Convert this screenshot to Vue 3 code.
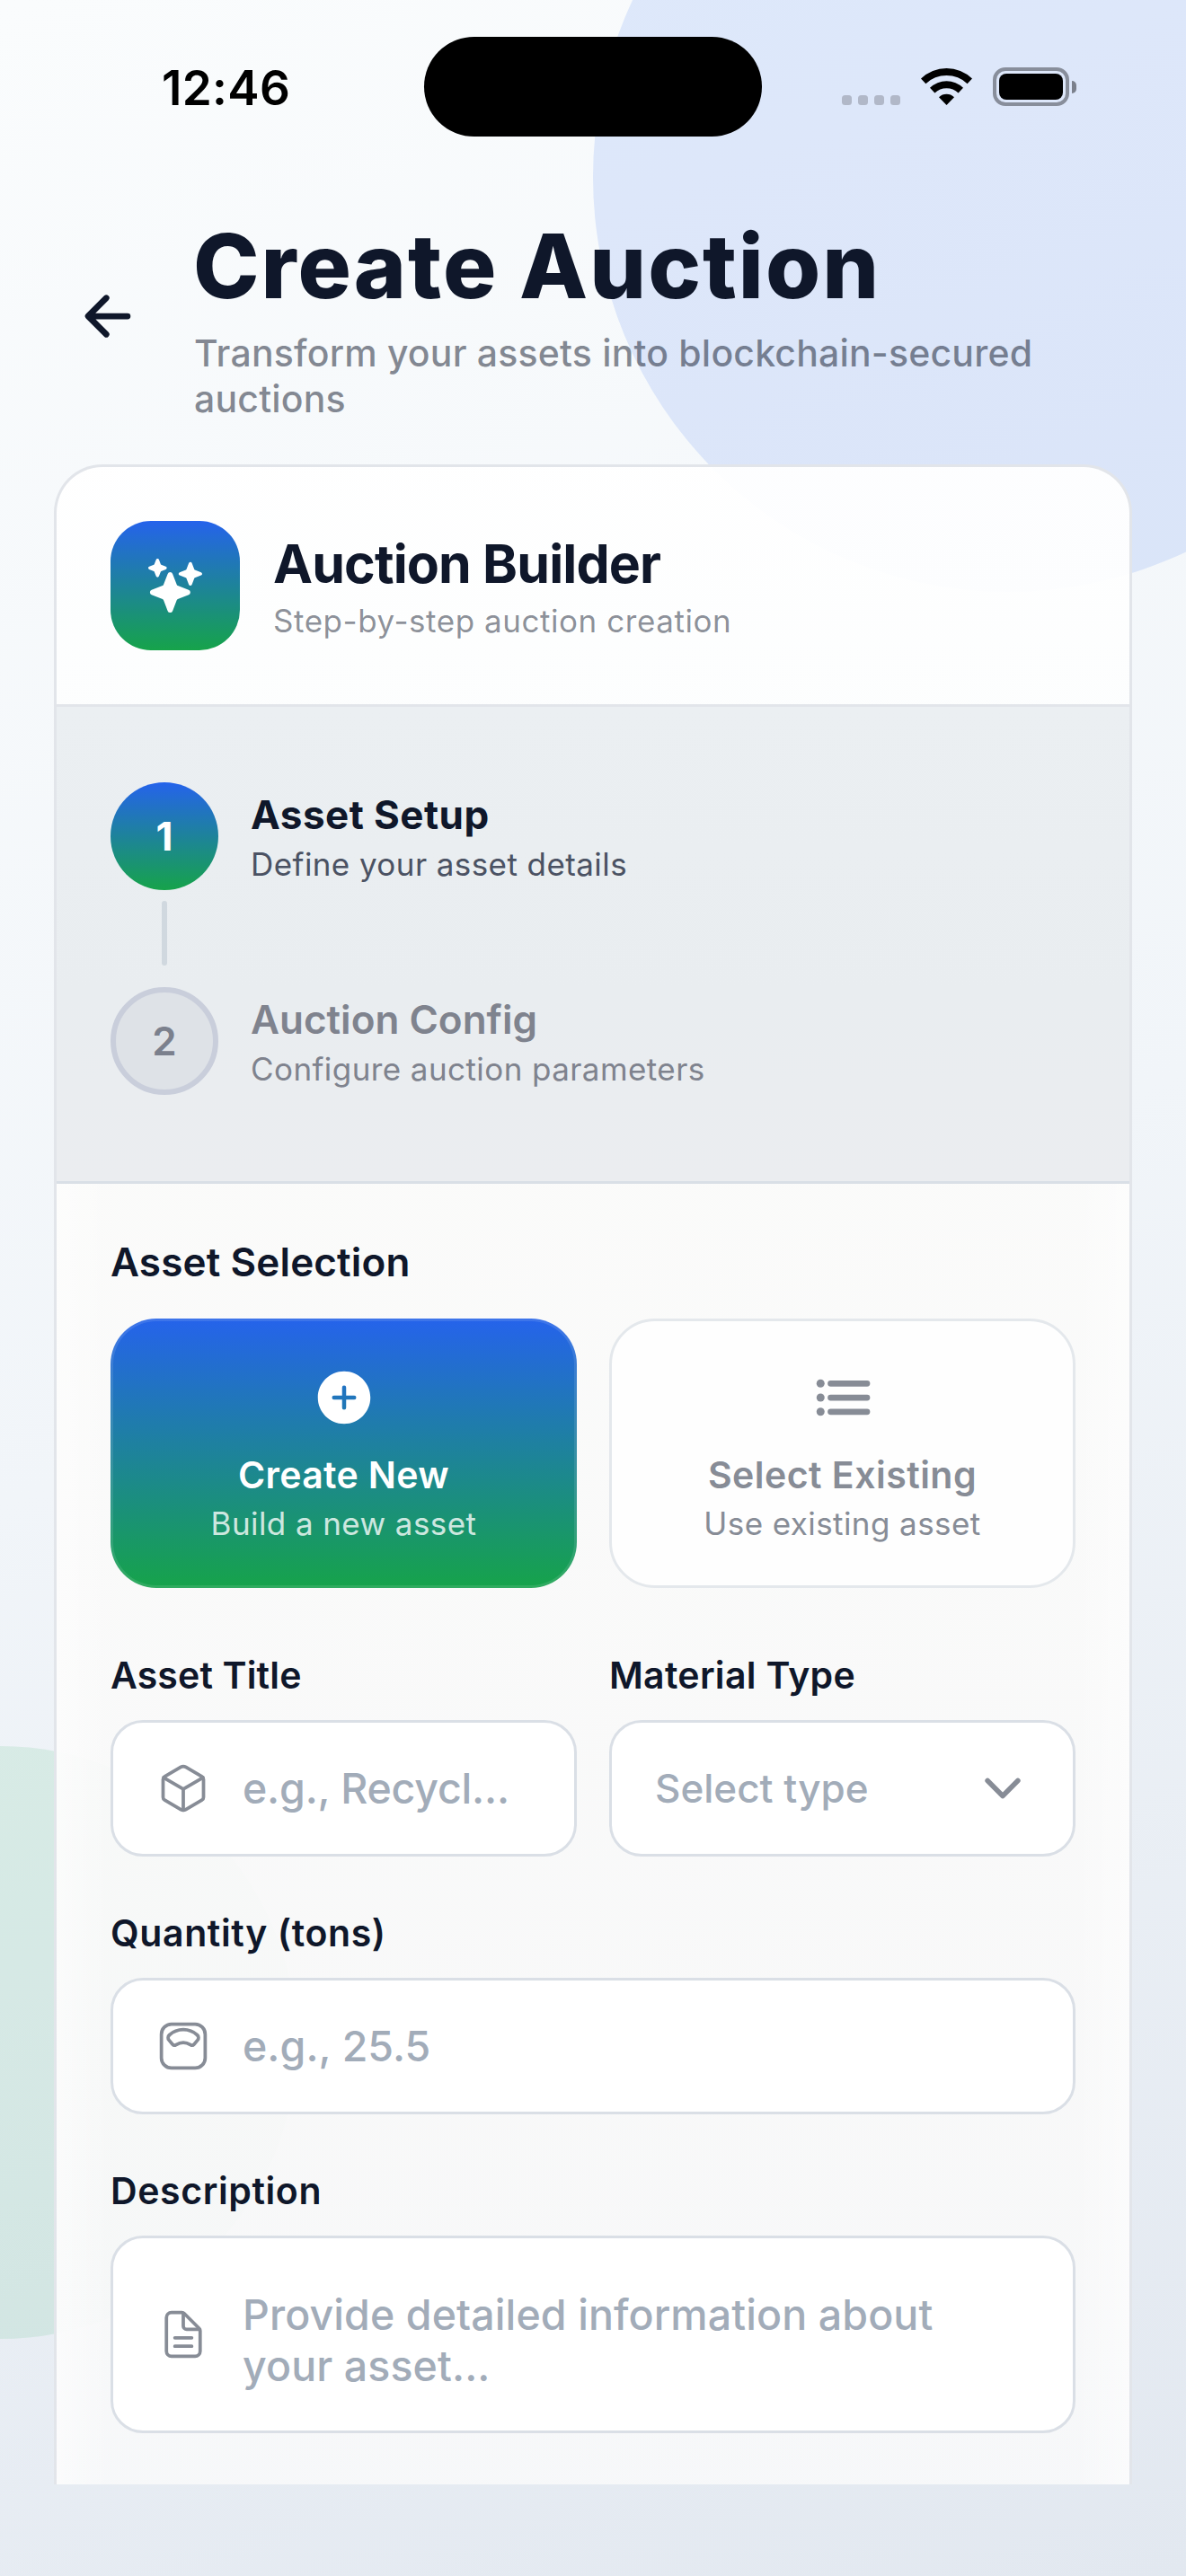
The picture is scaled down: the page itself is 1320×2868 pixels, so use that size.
<template>
  <div class="screen">
    <div class="blob blob-blue"></div>
    <div class="blob blob-green"></div>

    <!-- Status bar -->
    <div class="status-bar">
      <span class="time">12:46</span>
      <div class="island"></div>
      <div class="status-icons">
        <div class="signal"><i v-for="n in 4" :key="n"></i></div>
        <svg class="wifi" viewBox="0 0 57 42">
          <path d="M28.5 42 L20 33.2 A12.3 12.3 0 0 1 37 33.2 Z" />
          <path d="M10 22.8 A26.5 26.5 0 0 1 47 22.8 L41.6 28.4 A19 19 0 0 0 15.4 28.4 Z" />
          <path d="M0 12.6 A41 41 0 0 1 57 12.6 L51.6 18.2 A33.5 33.5 0 0 0 5.4 18.2 Z" />
        </svg>
        <div class="battery"><div class="battery-level"></div></div>
        <div class="battery-cap"></div>
      </div>
    </div>

    <!-- Page header -->
    <header class="header">
      <button class="back">
        <svg viewBox="0 0 512 512" class="line bold">
          <path d="M244 400L100 256l144-144M120 256h292" />
        </svg>
      </button>
      <div>
        <h1>Create Auction</h1>
        <p class="tagline">Transform your assets into blockchain-secured auctions</p>
      </div>
    </header>

    <main class="card">
      <div class="card-header">
        <div class="logo">
          <svg viewBox="0 0 512 512">
            <path
              d="M208 512a24.84 24.84 0 01-23.34-16l-39.84-103.6a16.06 16.06 0 00-9.19-9.19L32 343.34a25 25 0 010-46.68l103.6-39.84a16.06 16.06 0 009.19-9.19L184.66 144a25 25 0 0146.68 0l39.84 103.6a16.06 16.06 0 009.19 9.19l103 39.63a25.49 25.49 0 0116.63 24.1 24.82 24.82 0 01-16 22.82l-103.6 39.84a16.06 16.06 0 00-9.19 9.19L231.34 496A24.84 24.84 0 01208 512zM88 176a14.67 14.67 0 01-13.69-9.4l-16.86-43.84a7.28 7.28 0 00-4.21-4.21L9.4 101.69a14.67 14.67 0 010-27.38l43.84-16.86a7.31 7.31 0 004.21-4.21L74.16 9.79A15 15 0 0186.23.11a14.67 14.67 0 0115.46 9.29l16.86 43.84a7.31 7.31 0 004.21 4.21l43.84 16.86a14.67 14.67 0 010 27.38l-43.84 16.86a7.28 7.28 0 00-4.21 4.21l-16.86 43.84A14.67 14.67 0 0188 176zM400 256a16 16 0 01-14.93-10.26l-22.84-59.37a8 8 0 00-4.6-4.6l-59.37-22.84a16 16 0 010-29.86l59.37-22.84a8 8 0 004.6-4.6L384.9 42.68a16.45 16.45 0 0113.17-10.57 16 16 0 0116.86 10.15l22.84 59.37a8 8 0 004.6 4.6l59.37 22.84a16 16 0 010 29.86l-59.37 22.84a8 8 0 00-4.6 4.6l-22.84 59.37A16 16 0 01400 256z"
            />
          </svg>
        </div>
        <div>
          <h2>Auction Builder</h2>
          <p class="card-sub">Step-by-step auction creation</p>
        </div>
      </div>

      <!-- Steps -->
      <div class="steps">
        <template v-for="(step, i) in steps" :key="step.title">
          <div v-if="i > 0" class="connector"></div>
          <div class="step" :class="{ active: i === currentStep }">
            <div class="step-number">{{ i + 1 }}</div>
            <div>
              <div class="step-title">{{ step.title }}</div>
              <div class="step-text">{{ step.text }}</div>
            </div>
          </div>
        </template>
      </div>

      <!-- Form -->
      <div class="form">
        <h3>Asset Selection</h3>
        <div class="row">
          <button class="choice" :class="{ selected: mode === 'new' }" @click="mode = 'new'">
            <svg viewBox="0 0 512 512">
              <path
                d="M256 48C141.31 48 48 141.31 48 256s93.31 208 208 208 208-93.31 208-208S370.69 48 256 48zm80 224h-64v64a16 16 0 01-32 0v-64h-64a16 16 0 010-32h64v-64a16 16 0 0132 0v64h64a16 16 0 010 32z"
              />
            </svg>
            <span class="choice-title">Create New</span>
            <span class="choice-text">Build a new asset</span>
          </button>
          <button class="choice" :class="{ selected: mode === 'existing' }" @click="mode = 'existing'">
            <svg viewBox="0 0 512 512">
              <path class="list-lines" d="M160 144h288M160 256h288M160 368h288" />
              <circle cx="80" cy="144" r="32" />
              <circle cx="80" cy="256" r="32" />
              <circle cx="80" cy="368" r="32" />
            </svg>
            <span class="choice-title existing">Select Existing</span>
            <span class="choice-text">Use existing asset</span>
          </button>
        </div>

        <div class="row">
          <div class="field">
            <label>Asset Title</label>
            <div class="input">
              <svg viewBox="0 0 512 512" class="line">
                <path
                  d="M448 341.37V170.61A32 32 0 00432.11 143l-152-88.46a47.94 47.94 0 00-48.24 0L79.89 143A32 32 0 0064 170.61v170.76A32 32 0 0079.89 369l152 88.46a48 48 0 0048.24 0l152-88.46A32 32 0 00448 341.37z"
                />
                <path d="M69 153.99l187 110 187-110M256 463.99v-200" />
              </svg>
              <span class="placeholder tight">e.g., Recycl...</span>
            </div>
          </div>
          <div class="field">
            <label class="material">Material Type</label>
            <div class="input">
              <span class="placeholder select">Select type</span>
              <svg viewBox="0 0 512 512" class="line bold">
                <path d="M112 184l144 144 144-144" />
              </svg>
            </div>
          </div>
        </div>

        <div class="field">
          <label class="wide">Quantity (tons)</label>
          <div class="input">
            <svg viewBox="0 0 512 512" class="line">
              <rect x="48" y="48" width="416" height="416" rx="96" />
              <path
                d="M388.94 151.56c-24.46-22.28-68.72-51.4-132.94-51.4s-108.48 29.12-132.94 51.4a34.66 34.66 0 00-3.06 48.08l33.32 39.21a26.07 26.07 0 0033.6 5.21c15.92-9.83 40.91-21.64 69.1-21.64s53.18 11.81 69.1 21.64a26.07 26.07 0 0033.6-5.21L392 199.64a34.66 34.66 0 00-3.06-48.08z"
              />
            </svg>
            <span class="placeholder">e.g., 25.5</span>
          </div>
        </div>

        <div class="field">
          <label class="wide">Description</label>
          <div class="input textarea">
            <svg viewBox="0 0 512 512" class="line">
              <path
                d="M416 221.25V416a48 48 0 01-48 48H144a48 48 0 01-48-48V96a48 48 0 0148-48h98.75a32 32 0 0122.62 9.37l141.26 141.26a32 32 0 019.37 22.62z"
              />
              <path d="M256 56v120a32 32 0 0032 32h120M176 288h160M176 368h160" />
            </svg>
            <span class="placeholder">Provide detailed information about your asset...</span>
          </div>
        </div>
      </div>
    </main>
  </div>
</template>

<script setup>
import { ref } from "vue";

const currentStep = ref(0);
const mode = ref("new");

const steps = [
  { title: "Asset Setup", text: "Define your asset details" },
  { title: "Auction Config", text: "Configure auction parameters" },
];
</script>

<style>
body {
  margin: 0;
}
</style>

<style scoped>
* {
  box-sizing: border-box;
}

.screen {
  position: relative;
  width: 1320px;
  height: 2868px;
  overflow: hidden;
  font-family: Inter, "Liberation Sans", sans-serif;
  color: #0f172a;
  background: linear-gradient(160deg, #fafcfd 0%, #f1f5f9 50%, #e2e8f0 100%);
}

h1,
h2,
h3,
p {
  margin: 0;
}

button {
  padding: 0;
  border: none;
  background: none;
  font-family: inherit;
  color: inherit;
}

svg {
  display: block;
  flex-shrink: 0;
  fill: currentColor;
}

/* Outline icons */
.line {
  fill: none;
  stroke: currentColor;
  stroke-width: 32;
  stroke-linecap: round;
  stroke-linejoin: round;
}

.line.bold {
  stroke-width: 48;
}

/* Background circles */
.blob {
  position: absolute;
  border-radius: 50%;
}

.blob-blue {
  width: 924px;
  height: 924px;
  top: -265px;
  left: 660px;
  background: rgba(37, 99, 235, 0.12);
}

.blob-green {
  width: 660px;
  height: 660px;
  top: 1944px;
  left: -330px;
  background: rgba(22, 163, 74, 0.1);
}

/* Status bar */
.status-bar {
  position: relative;
  display: grid;
  grid-template-columns: 472px 376px 1fr;
  height: 186px;
  color: #000;
}

.time {
  padding: 46px 0 0 180px;
  font-size: 53px;
  line-height: 104px;
  font-weight: 600;
  letter-spacing: 0.34px;
}

.island {
  height: 111px;
  margin-top: 41px;
  border-radius: 56px;
  background: #000;
}

.status-icons {
  display: flex;
  align-items: flex-start;
  padding: 75px 0 0 89px;
}

.signal {
  display: flex;
  gap: 7px;
  margin-top: 31px;
}

.signal i {
  width: 11px;
  height: 11px;
  border-radius: 3.5px;
  background: #b1b8c8;
}

.wifi {
  width: 57px;
  height: 42px;
  margin-left: 23px;
}

.battery {
  width: 85px;
  height: 43px;
  margin-left: 23px;
  padding: 3px;
  border: 4px solid #888e9b;
  border-radius: 14px;
}

.battery-level {
  height: 29px;
  border-radius: 8px;
  background: #000;
}

.battery-cap {
  width: 5px;
  height: 14px;
  margin: 15px 0 0 3px;
  border-radius: 0 5px 5px 0;
  background: #7b808c;
}

/* Header */
.header {
  position: relative;
  display: flex;
  align-items: center;
  gap: 36px;
  padding: 47px 60px;
}

.back {
  display: flex;
  align-items: center;
  justify-content: center;
  width: 120px;
  height: 120px;
  flex-shrink: 0;
}

.back svg {
  width: 72px;
  height: 72px;
}

h1 {
  font-size: 99px;
  line-height: 126px;
  font-weight: 800;
  letter-spacing: 2px;
  margin-left: -1px;
}

.tagline {
  margin-top: 9px;
  font-size: 41px;
  line-height: 51px;
  font-weight: 500;
  letter-spacing: 0.18px;
  color: rgba(15, 23, 42, 0.5);
}

/* Card */
.card {
  position: relative;
  height: 2249px;
  margin: 0 60px;
  border: 3px solid #e2e5ea;
  border-bottom: none;
  border-radius: 54px 54px 0 0;
  overflow: hidden;
  background: linear-gradient(
    rgba(255, 255, 255, 0.95) 0px,
    rgba(253, 254, 254, 0.94) 264px,
    rgba(251, 251, 250, 0.94) 800px,
    rgba(249, 249, 249, 0.93) 1900px,
    rgba(248, 249, 250, 0.92) 2249px
  );
}

.card-header {
  display: flex;
  align-items: center;
  gap: 37px;
  height: 267px;
  padding: 0 60px;
  border-bottom: 3px solid #e2e5ea;
}

.logo {
  display: flex;
  align-items: center;
  justify-content: center;
  width: 144px;
  height: 144px;
  border-radius: 45px;
  color: #fff;
  background: linear-gradient(#2563eb, #16a34a);
}

.logo svg {
  width: 60px;
  height: 60px;
}

h2 {
  font-size: 59px;
  line-height: 74px;
  font-weight: 700;
  letter-spacing: -0.86px;
}

.card-sub {
  margin-top: 5px;
  font-size: 35px;
  line-height: 43px;
  letter-spacing: 0.55px;
  color: rgba(15, 23, 42, 0.49);
}

/* Steps */
.steps {
  height: 531px;
  padding: 84px 60px 96px;
  border-bottom: 3px solid #d9dfe6;
  background: linear-gradient(#ebeff2, #e9edf0 60%, #ebedf0);
}

.step {
  display: flex;
  align-items: center;
  gap: 36px;
}

.step-number {
  display: flex;
  align-items: center;
  justify-content: center;
  width: 120px;
  height: 120px;
  border: 6px solid #c9cedb;
  border-radius: 50%;
  font-size: 44px;
  font-weight: 600;
  color: #7b808d;
  background: #dee2e7;
}

.step-title {
  font-size: 44px;
  line-height: 60px;
  font-weight: 600;
  color: #7f838e;
}

.step-text {
  margin-top: 1px;
  font-size: 35px;
  line-height: 48px;
  letter-spacing: 0.42px;
  color: #7f838e;
}

.step.active .step-number {
  border: none;
  font-weight: 700;
  color: #fff;
  background: linear-gradient(#2563eb, #16a34a);
}

.step.active .step-title {
  font-weight: 700;
  letter-spacing: 0.45px;
  color: #0f172a;
}

.step.active .step-text {
  color: #4b5263;
}

.connector {
  width: 6px;
  height: 72px;
  margin: 12px 0 24px 57px;
  border-radius: 3px;
  background: #d0d8df;
}

/* Form */
.form {
  height: 1451px;
  padding: 60px 60px 0;
  background: linear-gradient(
    90deg,
    rgba(255, 255, 255, 0.5),
    rgba(255, 255, 255, 0) 60px,
    rgba(255, 255, 255, 0) calc(100% - 60px),
    rgba(255, 255, 255, 0.5)
  );
}

h3 {
  margin-bottom: 36px;
  font-size: 44px;
  line-height: 54px;
  font-weight: 600;
  letter-spacing: 0.15px;
}

.row {
  display: grid;
  grid-template-columns: 1fr 1fr;
  gap: 36px;
}

.choice {
  display: flex;
  flex-direction: column;
  align-items: center;
  height: 300px;
  padding-top: 49px;
  border: 3px solid #e4e8ec;
  border-radius: 51px;
  color: #878c96;
  background: #fefefe;
}

.choice svg {
  width: 72px;
  height: 72px;
}

.list-lines {
  stroke: currentColor;
  stroke-width: 48;
  stroke-linecap: round;
}

.choice-title {
  margin-top: 25px;
  font-size: 41px;
  line-height: 50px;
  font-weight: 600;
  letter-spacing: 0.35px;
}

.choice-title.existing {
  letter-spacing: 0.48px;
}

.choice-text {
  margin-top: 6px;
  font-size: 35px;
  line-height: 46px;
  letter-spacing: 0.42px;
}

.choice.selected {
  border-color: rgba(226, 232, 240, 0.13);
  color: #fff;
  background: linear-gradient(#2563eb, #16a34a) border-box;
}

.choice.selected .choice-text {
  color: rgba(255, 255, 255, 0.8);
}

.row + .row {
  margin-top: 72px;
}

.field {
  display: flex;
  flex-direction: column;
}

.row ~ .field {
  margin-top: 60px;
}

label {
  margin-bottom: 25px;
  font-size: 41px;
  line-height: 50px;
  font-weight: 600;
  letter-spacing: 0.15px;
}

label.material {
  letter-spacing: 0.3px;
}

label.wide {
  letter-spacing: 0.6px;
}

.input {
  display: flex;
  align-items: center;
  gap: 36px;
  height: 152px;
  padding: 0 48px;
  border: 3px solid #dadfe6;
  border-radius: 36px;
  color: #878c96;
  background: #fff;
}

.input svg {
  width: 60px;
  height: 60px;
}

.placeholder {
  font-size: 46.5px;
  line-height: 57px;
  font-weight: 500;
  letter-spacing: 0.05px;
  color: #a2acb9;
}

.placeholder.tight {
  white-space: nowrap;
  letter-spacing: -0.2px;
}

.placeholder.select {
  flex: 1;
  font-size: 44px;
  letter-spacing: 0;
}

.input.textarea {
  height: 220px;
}

.textarea .placeholder {
  padding-top: 14px;
  letter-spacing: 0.1px;
}
</style>
